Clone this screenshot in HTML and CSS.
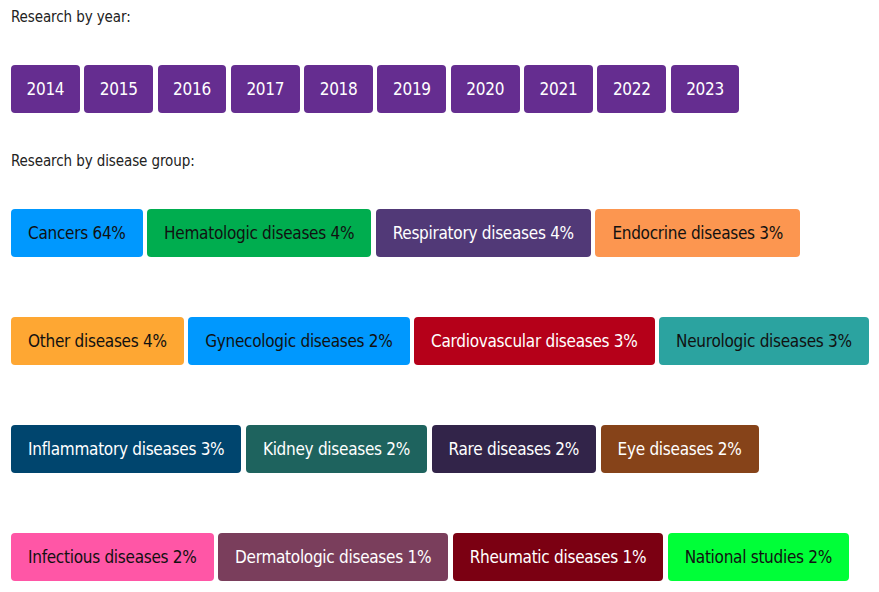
FILE: index.html
```html
<!DOCTYPE html>
<html>
<head>
<meta charset="utf-8">
<link rel="stylesheet" href="styles.css">
</head>
<body>
<div class="page">
  <p class="label">Research by year:</p>
  <div class="btns years">
    <a class="btn y">2014</a>
    <a class="btn y">2015</a>
    <a class="btn y">2016</a>
    <a class="btn y">2017</a>
    <a class="btn y">2018</a>
    <a class="btn y">2019</a>
    <a class="btn y">2020</a>
    <a class="btn y">2021</a>
    <a class="btn y">2022</a>
    <a class="btn y">2023</a>
  </div>
  <p class="label">Research by disease group:</p>
  <div class="btns groups">
    <a class="btn c-cancer">Cancers 64%</a>
    <a class="btn c-hema">Hematologic diseases 4%</a>
    <a class="btn c-resp">Respiratory diseases 4%</a>
    <a class="btn c-endo">Endocrine diseases 3%</a>
    <a class="btn c-other">Other diseases 4%</a>
    <a class="btn c-gyn">Gynecologic diseases 2%</a>
    <a class="btn c-cardio">Cardiovascular diseases 3%</a>
    <a class="btn c-neuro">Neurologic diseases 3%</a>
    <a class="btn c-infl">Inflammatory diseases 3%</a>
    <a class="btn c-kidney">Kidney diseases 2%</a>
    <a class="btn c-rare">Rare diseases 2%</a>
    <a class="btn c-eye">Eye diseases 2%</a>
    <a class="btn c-infect">Infectious diseases 2%</a>
    <a class="btn c-derm">Dermatologic diseases 1%</a>
    <a class="btn c-rheum">Rheumatic diseases 1%</a>
    <a class="btn c-nat">National studies 2%</a>
  </div>
</div>
</body>
</html>
```
FILE: styles.css
```css
html, body {
  margin: 0;
  padding: 0;
  background: #ffffff;
}
.page {
  padding: 7px 8px 0 11px;
  font-family: "DejaVu Sans Condensed", "Liberation Sans", sans-serif;
  color: #222222;
}
.label {
  margin: 0 0 38px 0;
  font-size: 15px;
  line-height: 20px;
  letter-spacing: -0.1px;
  color: #222222;
}
.btns {
  display: flex;
  flex-wrap: wrap;
  column-gap: 4.5px;
  row-gap: 60px;
  margin-bottom: 38px;
}
.btn {
  display: block;
  height: 48px;
  line-height: 49px;
  padding: 0 17px;
  border-radius: 4px;
  font-size: 17px;
  letter-spacing: -0.28px;
  color: #ffffff;
  white-space: nowrap;
}
.y { background: #652d90; padding: 0 15.5px; }
.c-cancer { background: #0098fe; color: #111111; }
.c-hema { background: #00ad4f; color: #111111; }
.c-resp { background: #513977; }
.c-endo { background: #fc9650; color: #111111; }
.c-other { background: #fea733; color: #111111; }
.c-gyn { background: #0098fe; color: #111111; }
.c-cardio { background: #b50019; }
.c-neuro { background: #2ba3a0; color: #111111; }
.c-infl { background: #00456e; }
.c-kidney { background: #1e635e; }
.c-rare { background: #322449; }
.c-eye { background: #864319; }
.c-infect { background: #ff56a6; color: #111111; }
.c-derm { background: #7a3e5c; }
.c-rheum { background: #7b0012; }
.c-nat { background: #00ff38; color: #111111; }
```
